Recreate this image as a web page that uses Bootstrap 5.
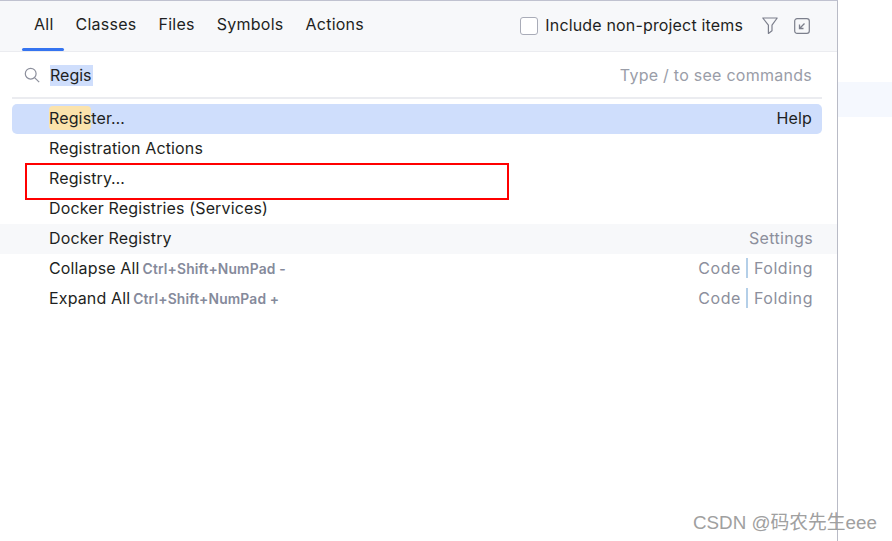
<!DOCTYPE html>
<html lang="en">
<head>
<meta charset="utf-8">
<title>Search Everywhere</title>
<link rel="stylesheet" href="https://cdn.jsdelivr.net/npm/bootstrap@5.3.0/dist/css/bootstrap.min.css">
<style>
html,body{margin:0;width:892px;height:541px;overflow:hidden;background:#fff}
body{font-family:Inter,"Liberation Sans",sans-serif;font-size:16px;color:#1e1f22;position:relative}
.stage{height:541px}
.panel{width:838px;height:541px;border-top:1px solid #c0c2d0;border-right:1px solid #b9bbc6;flex:none}
.sideband{margin-top:82px;height:35px;flex:1;background:#f5f8fe}
.headbar{height:51px;background:#f7f8fa;border-bottom:1px solid #ebecf0;padding:0 27px 0 22px}
.tabitem{height:50px;padding:0 10px 0 12px;line-height:47px;color:#1e1f22;text-decoration:none;position:relative;letter-spacing:.25px}
.tabitem.on::after{content:"";position:absolute;left:0;right:0;bottom:0;height:3px;border-radius:2px;background:#3574f0}
.rightgroup{margin-top:-1px}
.opt{gap:7px;margin-right:19px;letter-spacing:.16px}
.optlabel{margin-bottom:2px}
.box{width:18px;height:18px;border:1px solid #a9acb8;border-radius:3px;background:#fff;display:block}
.searchrow{height:45px;margin:0 25px 0 24px}
.query{margin-left:10px;margin-top:1px;background:#cfdefc;line-height:21px;height:21px;padding:0 1px 0 0;color:#1e1f22}
.hint{color:#9a9da8;letter-spacing:.26px;margin-top:1px}
.rule{height:2px;background:#ebecf0;margin:0 15px 0 12px}
.rowsbox{margin:5px 15px 0 12px}
.hitrow{height:30px;line-height:29px;padding:0 10px 0 37px}
.hitrow.sel{background:#cfdefc;border-radius:5px}
.hitrow.hov{background:#f7f8fa;margin:0 -15px 0 -12px;padding:0 24px 0 49px}
.hitrow.trail{padding-right:9px}
.mm{background:#fbe3ac;border-radius:4px;padding:2px 0}
.keys{font-size:13.8px;font-weight:600;color:#858a9b;margin-left:3px;letter-spacing:.17px}
.where{color:#8c8f9c;letter-spacing:.35px}
.trail .where{letter-spacing:.55px}
.bar{display:inline-block;width:2px;height:20px;background:#b4cfe8;vertical-align:-4px;margin:0 6px 0 5px}
.callout{position:absolute;left:25px;top:163px;width:484px;height:37px;border:2px solid #f00}
.mark-wm{position:absolute;left:693px;top:507px;color:#a0a0a0;font:18.8px "Liberation Sans","Noto Sans CJK SC",sans-serif;white-space:nowrap}
.rowtext{letter-spacing:.14px}
</style>
</head>
<body>
<div class="stage d-flex">
  <div class="panel">
    <div class="headbar d-flex align-items-center justify-content-between">
      <nav class="d-flex">
        <a class="tabitem on" href="#">All</a>
        <a class="tabitem" href="#">Classes</a>
        <a class="tabitem" href="#">Files</a>
        <a class="tabitem" href="#">Symbols</a>
        <a class="tabitem" href="#">Actions</a>
      </nav>
      <div class="rightgroup d-flex align-items-center">
        <div class="opt d-flex align-items-center"><span class="box"></span><span class="optlabel">Include non-project items</span></div>
        <svg width="16" height="17" viewBox="0 0 16 17" fill="none" stroke="#7c7f8c" stroke-width="1.2" class="me-3"><path d="M.8 1h14.4L10 8.2v5.6l-3.6 2.6V8.2z" stroke-linejoin="round"/></svg>
        <svg width="16" height="16" viewBox="0 0 16 16" fill="none" stroke="#7c7f8c" stroke-width="1.2"><rect x=".7" y=".7" width="14.6" height="14.6" rx="2.4"/><path d="M10.5 5.5 5.8 10.2M5.5 6.5v4h4" stroke-width="1.3"/></svg>
      </div>
    </div>
    <div class="searchrow d-flex align-items-center">
      <svg width="16" height="16" viewBox="0 0 16 16" fill="none" stroke="#8c8f9c" stroke-width="1.2"><circle cx="6.7" cy="6.7" r="5.4"/><path d="m10.8 10.8 4.4 4.4"/></svg>
      <span class="query">Regis</span>
      <span class="hint ms-auto">Type / to see commands</span>
    </div>
    <div class="rule"></div>
    <div class="rowsbox rowtext">
      <div class="hitrow sel d-flex justify-content-between"><span><span class="mm">Regis</span>ter…</span><span>Help</span></div>
      <div class="hitrow d-flex"><span>Registration Actions</span></div>
      <div class="hitrow d-flex"><span>Registry…</span></div>
      <div class="hitrow d-flex"><span>Docker Registries (Services)</span></div>
      <div class="hitrow hov d-flex justify-content-between"><span>Docker Registry</span><span class="where">Settings</span></div>
      <div class="hitrow trail d-flex justify-content-between"><span>Collapse All<span class="keys">Ctrl+Shift+NumPad -</span></span><span class="where">Code<span class="bar"></span>Folding</span></div>
      <div class="hitrow trail d-flex justify-content-between"><span>Expand All<span class="keys">Ctrl+Shift+NumPad +</span></span><span class="where">Code<span class="bar"></span>Folding</span></div>
    </div>
  </div>
  <div class="sideband"></div>
</div>
<div class="callout"></div>
<div class="mark-wm">CSDN @码农先生eee</div>
<script src="https://cdn.jsdelivr.net/npm/bootstrap@5.3.0/dist/js/bootstrap.bundle.min.js"></script>
</body>
</html>
